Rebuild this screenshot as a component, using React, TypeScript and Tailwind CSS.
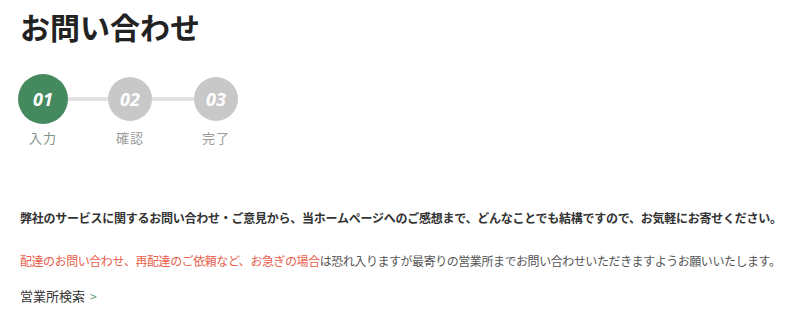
const steps = [
  { no: '01', label: '入力', active: true },
  { no: '02', label: '確認', active: false },
  { no: '03', label: '完了', active: false },
]

function Stepper() {
  return (
    <div className="flex items-start">
      {steps.map((step, i) => (
        <div key={step.no} className="flex items-start">
          {i === 1 && <div className="mt-[23px] h-[4px] w-[40px] bg-[#e2e2e2]" />}
          {i === 2 && <div className="mt-[23px] h-[4px] w-[42px] bg-[#e2e2e2]" />}
          <div className="flex flex-col items-center">
            <div className="flex h-[50px] items-center">
              <div
                className={
                  step.active
                    ? 'flex h-[50px] w-[50px] items-center justify-center rounded-full bg-[#458a5e]'
                    : 'flex h-[44px] w-[44px] items-center justify-center rounded-full bg-[#c8c8c8]'
                }
              >
                <span className="font-['Open_Sans',sans-serif] text-[18px] font-bold italic leading-none text-white">
                  {step.no}
                </span>
              </div>
            </div>
            <span
              className={
                step.active
                  ? 'mt-[4px] whitespace-nowrap text-[13px] tracking-[1px] text-[#7f9286]'
                  : 'mt-[4px] whitespace-nowrap text-[13px] tracking-[1px] text-[#9a9a9a]'
              }
            >
              {step.label}
            </span>
          </div>
        </div>
      ))}
    </div>
  )
}

export default function App() {
  return (
    <div className="min-h-[324px] bg-white pl-[18px] pt-[8px] font-['Noto_Sans_CJK_JP',sans-serif] text-[#333]">
      <h1 className="pl-[2px] text-[30px] font-bold leading-[36px] text-[#222]">
        お問い合わせ
      </h1>

      <div className="mt-[30px]">
        <Stepper />
      </div>

      <div className="pl-[2px]">
        <p className="mt-[60px] whitespace-nowrap text-[12px] font-bold leading-[20px] tracking-[-0.25px] text-[#333]">
          弊社のサービスに関するお問い合わせ・ご意見から、当ホームページへのご感想まで、どんなことでも結構ですので、お気軽にお寄せください。
        </p>

        <p className="mt-[23px] whitespace-nowrap text-[12px] leading-[20px] tracking-[-0.45px] text-[#555]">
          <span className="text-[#e8604c]">配達のお問い合わせ、再配達のご依頼など、お急ぎの場合</span>
          は恐れ入りますが最寄りの営業所までお問い合わせいただきますようお願いいたします。
        </p>

        <a href="#" className="mt-[15px] flex items-center gap-[5px] text-[13px] leading-[20px] text-[#333]">
          営業所検索
          <span className="text-[12px] text-[#5f9a73]">&gt;</span>
        </a>
      </div>
    </div>
  )
}
